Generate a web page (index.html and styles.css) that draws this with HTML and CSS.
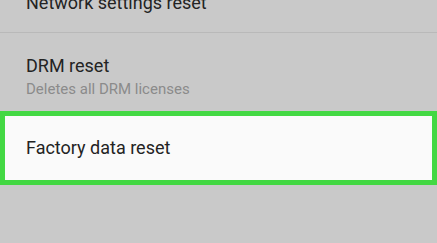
FILE: index.html
```html
<!DOCTYPE html>
<html lang="en">
<head>
  <meta charset="UTF-8">
  <title>Reset options</title>
  <link rel="stylesheet" href="styles.css">
</head>
<body>
  <div class="list">
    <div class="item item-cut">
      <div class="title">Network settings reset</div>
    </div>
    <div class="item item-drm">
      <div class="title">DRM reset</div>
      <div class="sub">Deletes all DRM licenses</div>
    </div>
    <div class="item item-factory">
      <div class="title">Factory data reset</div>
    </div>
  </div>
</body>
</html>
```

FILE: styles.css
```css
* {
  margin: 0;
  padding: 0;
  box-sizing: border-box;
  font-family: Roboto, 'Noto Sans', sans-serif;
}

body {
  background: #c9c9c9;
  width: 437px;
  height: 243px;
  overflow: hidden;
}

.list {
  display: flex;
  flex-direction: column;
}

.item {
  padding-left: 26px;
}

/* first row is scrolled partly out of view */
.item-cut {
  height: 43px;
  margin-top: -10px;
  padding-top: 2px;
  border-bottom: 1px solid #b9b9b9;
}

.item-drm {
  height: 78px;
  padding-top: 22px;
}

.title {
  font-size: 18px;
  color: #232323;
  line-height: 22px;
}

.sub {
  font-size: 15px;
  color: #8b8b8b;
  line-height: 20px;
  margin-top: 2px;
}

.item-factory {
  height: 74px;
  background: #fafafa;
  border: 5px solid #43d843;
  padding-left: 21px;
  display: flex;
  align-items: center;
}
```
